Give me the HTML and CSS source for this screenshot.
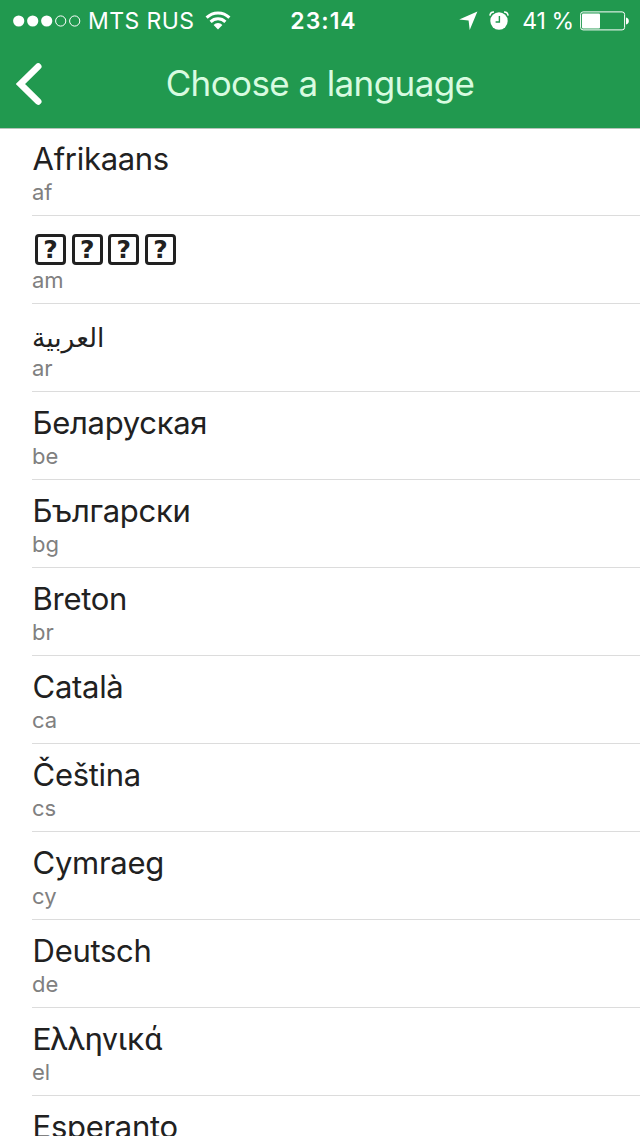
FILE: index.html
```html
<!DOCTYPE html>
<html lang="en">
<head>
    <meta charset="UTF-8">
    <meta name="viewport" content="width=device-width, initial-scale=1.0">
    <title>Choose a language</title>
    <link rel="stylesheet" href="styles.css">
</head>
<body>
    <header class="header">
        <div class="status-bar">
            <div class="status-left">
                <svg class="signal" width="68" height="12" viewBox="0 0 68 12">
                    <g fill="#fff">
                        <circle cx="5.7" cy="6" r="5.6"/>
                        <circle cx="19.7" cy="6" r="5.6"/>
                        <circle cx="33.7" cy="6" r="5.6"/>
                    </g>
                    <g fill="none" stroke="#fff" stroke-width="1">
                        <circle cx="47.7" cy="6" r="5.1"/>
                        <circle cx="61.7" cy="6" r="5.1"/>
                    </g>
                </svg>
                <span class="carrier">MTS RUS</span>
                <svg class="wifi" width="26" height="19" viewBox="0 0 26 19">
                    <g fill="none" stroke="#fff" stroke-width="3">
                        <path d="M1.6 6.6a16.2 16.2 0 0 1 22.8 0"/>
                        <path d="M5.6 10.9a10.5 10.5 0 0 1 14.8 0"/>
                    </g>
                    <path d="M13 18.4l-4.4-4.5a6.2 6.2 0 0 1 8.8 0z" fill="#fff"/>
                </svg>
            </div>
            <span class="time">23:14</span>
            <div class="status-right">
                <svg class="location" width="19" height="19" viewBox="0 0 19 19">
                    <path d="M18.4.6L10.7 18.9 9.6 9.6.2 8.4z" fill="#fff"/>
                </svg>
                <svg class="alarm" width="20" height="19" viewBox="0 0 20 19">
                    <circle cx="10" cy="10" r="8.7" fill="#fff"/>
                    <path d="M10.4 5v6H6.6" fill="none" stroke="#21994f" stroke-width="1.4"/>
                    <path d="M.9 4.6A4 4 0 0 1 5 1M19.1 4.6A4 4 0 0 0 15 1" fill="none" stroke="#fff" stroke-width="1.5"/>
                </svg>
                <span class="percent">41 %</span>
                <svg class="battery" width="49" height="20" viewBox="0 0 49 20">
                    <rect x=".6" y=".9" width="44" height="18" rx="2.5" fill="none" stroke="#fff"/>
                    <rect x="2" y="2.4" width="18" height="15" rx="1" fill="#fff"/>
                    <path d="M46 6.4c3.8.5 3.8 6.5 0 7z" fill="#fff"/>
                </svg>
            </div>
        </div>
        <div class="nav-bar">
            <svg class="back" width="26" height="44" viewBox="0 0 26 44">
                <path d="M22.2 4.5L4.5 22l17.7 17.5" fill="none" stroke="#fff" stroke-width="6.6" stroke-linecap="round"/>
            </svg>
            <h1 class="title">Choose a language</h1>
        </div>
    </header>

    <ul class="languages">
        <li class="language">
            <span class="name">Afrikaans</span>
            <span class="code">af</span>
        </li>
        <li class="language">
            <span class="name missing"><i class="glyph">?</i><i class="glyph">?</i><i class="glyph">?</i><i class="glyph">?</i></span>
            <span class="code">am</span>
        </li>
        <li class="language">
            <span class="name arabic" lang="ar">العربية</span>
            <span class="code">ar</span>
        </li>
        <li class="language">
            <span class="name">Беларуская</span>
            <span class="code">be</span>
        </li>
        <li class="language">
            <span class="name">Български</span>
            <span class="code">bg</span>
        </li>
        <li class="language">
            <span class="name">Breton</span>
            <span class="code">br</span>
        </li>
        <li class="language">
            <span class="name">Català</span>
            <span class="code">ca</span>
        </li>
        <li class="language">
            <span class="name">Čeština</span>
            <span class="code">cs</span>
        </li>
        <li class="language">
            <span class="name">Cymraeg</span>
            <span class="code">cy</span>
        </li>
        <li class="language">
            <span class="name">Deutsch</span>
            <span class="code">de</span>
        </li>
        <li class="language">
            <span class="name greek" lang="el">Ελληνικά</span>
            <span class="code">el</span>
        </li>
        <li class="language">
            <span class="name">Esperanto</span>
            <span class="code">eo</span>
        </li>
    </ul>
</body>
</html>
```
FILE: styles.css
```css
body {
    margin: 0;
    height: 1136px;
    overflow: hidden;
    background-color: #fff;
    color: #212121;
    font-family: Inter, Roboto, "Liberation Sans", sans-serif;
}

/* Header */
.header {
    height: 128px;
    background-color: #21994f;
    color: #fff;
    box-shadow: 0 1px 0 #b5c4ba;
    position: relative;
}

.status-bar {
    display: grid;
    grid-template-columns: 1fr auto 1fr;
    align-items: center;
    height: 40px;
    padding: 0 11px 0 13px;
    font-size: 23px;
    line-height: 40px;
}

.status-left,
.status-right {
    display: flex;
    align-items: center;
}

.status-right {
    justify-content: flex-end;
}

.carrier {
    margin: 0 11px 0 7px;
    letter-spacing: 0.4px;
}

.time {
    padding: 1px 0 0 5px;
    font-weight: 600;
    letter-spacing: 1px;
}

.alarm {
    margin: 0 13px 0 11px;
}

.percent {
    margin-right: 6px;
    word-spacing: -1px;
}

.nav-bar {
    display: grid;
    grid-template-columns: 26px 1fr 26px;
    align-items: center;
    height: 88px;
    padding: 0 16px;
}

.title {
    margin: 0;
    padding-bottom: 2px;
    color: #d8fbe0;
    font-size: 35px;
    font-weight: 400;
    letter-spacing: -0.6px;
    line-height: 44px;
    text-align: center;
}

/* Language list */
.languages {
    margin: 0;
    padding: 0 0 0 32px;
    list-style: none;
}

.language {
    display: flex;
    flex-direction: column;
    align-items: flex-start;
    box-sizing: border-box;
    height: 88px;
    padding-top: 12px;
    border-bottom: 1px solid #dcdcdc;
}

.name {
    height: 38px;
    padding-left: 0.6px;
    font-size: 31px;
    letter-spacing: -0.3px;
    line-height: 38px;
}

.code {
    color: #808080;
    font-size: 22px;
    line-height: 28px;
}

.arabic {
    padding-left: 0;
    font-family: "DejaVu Sans", sans-serif;
    font-size: 26.5px;
    letter-spacing: 0;
    line-height: 43px;
}

.greek {
    font-family: Roboto, sans-serif;
    font-size: 32px;
    letter-spacing: -0.6px;
}

/* Placeholder boxes for characters the font lacks */
.missing {
    display: flex;
    align-items: flex-end;
    gap: 5.7px;
    box-sizing: border-box;
    padding: 0 0 1px 3px;
}

.glyph {
    box-sizing: border-box;
    width: 31px;
    height: 31px;
    border: 3px solid #212121;
    border-radius: 4px;
    font: bold 25px/25px "DejaVu Sans", sans-serif;
    letter-spacing: 0;
    text-align: center;
}
```
